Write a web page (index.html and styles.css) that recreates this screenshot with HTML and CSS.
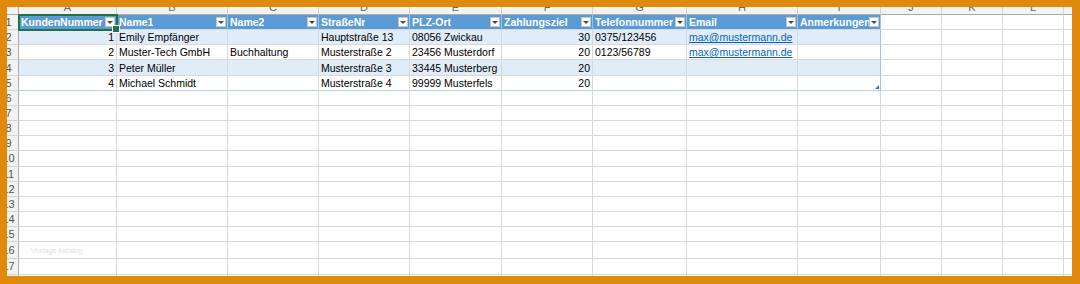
FILE: index.html
```html
<!DOCTYPE html>
<html lang="de">
<head>
  <meta charset="UTF-8">
  <meta name="viewport" content="width=device-width, initial-scale=1.0">
  <title>Kundenliste</title>
  <link rel="stylesheet" href="styles.css">
</head>
<body>
  <div class="sheet-wrap">
    <table class="sheet">
      <colgroup>
        <col class="w-rh">
        <col class="w-a"><col class="w-b"><col class="w-c"><col class="w-d"><col class="w-e">
        <col class="w-f"><col class="w-g"><col class="w-h"><col class="w-i">
        <col class="w-j"><col class="w-k"><col class="w-l"><col class="w-m">
      </colgroup>
      <thead>
        <tr class="letters">
          <th class="corner"></th>
          <th>A</th><th>B</th><th>C</th><th>D</th><th>E</th><th>F</th><th>G</th>
          <th>H</th><th>I</th><th>J</th><th>K</th><th>L</th><th>M</th>
        </tr>
      </thead>
      <tbody id="rows">
        <tr>
          <th class="rh">1</th>
          <td class="th sel"><div class="hd"><span>KundenNummer</span><i class="flt"></i></div></td>
          <td class="th"><div class="hd"><span>Name1</span><i class="flt"></i></div></td>
          <td class="th"><div class="hd"><span>Name2</span><i class="flt"></i></div></td>
          <td class="th"><div class="hd"><span>StraßeNr</span><i class="flt"></i></div></td>
          <td class="th"><div class="hd"><span>PLZ-Ort</span><i class="flt"></i></div></td>
          <td class="th"><div class="hd"><span>Zahlungsziel</span><i class="flt"></i></div></td>
          <td class="th"><div class="hd"><span>Telefonnummer</span><i class="flt"></i></div></td>
          <td class="th"><div class="hd"><span>Email</span><i class="flt"></i></div></td>
          <td class="th last"><div class="hd"><span>Anmerkungen</span><i class="flt"></i></div></td>
          <td></td><td></td><td></td><td></td>
        </tr>
        <tr class="band">
          <th class="rh">2</th>
          <td class="t num">1</td>
          <td class="t">Emily Empfänger</td>
          <td class="t"></td>
          <td class="t">Hauptstraße 13</td>
          <td class="t">08056 Zwickau</td>
          <td class="t num">30</td>
          <td class="t">0375/123456</td>
          <td class="t"><a class="mail" href="#">max@mustermann.de</a></td>
          <td class="t last"></td>
          <td></td><td></td><td></td><td></td>
        </tr>
        <tr>
          <th class="rh">3</th>
          <td class="t num">2</td>
          <td class="t">Muster-Tech GmbH</td>
          <td class="t">Buchhaltung</td>
          <td class="t">Musterstraße 2</td>
          <td class="t">23456 Musterdorf</td>
          <td class="t num">20</td>
          <td class="t">0123/56789</td>
          <td class="t"><a class="mail" href="#">max@mustermann.de</a></td>
          <td class="t last"></td>
          <td></td><td></td><td></td><td></td>
        </tr>
        <tr class="band">
          <th class="rh">4</th>
          <td class="t num">3</td>
          <td class="t">Peter Müller</td>
          <td class="t"></td>
          <td class="t">Musterstraße 3</td>
          <td class="t">33445 Musterberg</td>
          <td class="t num">20</td>
          <td class="t"></td>
          <td class="t"></td>
          <td class="t last"></td>
          <td></td><td></td><td></td><td></td>
        </tr>
        <tr class="end">
          <th class="rh">5</th>
          <td class="t num">4</td>
          <td class="t">Michael Schmidt</td>
          <td class="t"></td>
          <td class="t">Musterstraße 4</td>
          <td class="t">99999 Musterfels</td>
          <td class="t num">20</td>
          <td class="t"></td>
          <td class="t"></td>
          <td class="t last grip"></td>
          <td></td><td></td><td></td><td></td>
        </tr>
      </tbody>
    </table>
  </div>

  <script>
    // empty rows below the table
    const rows = document.getElementById('rows');
    for (let r = 6; r <= 18; r++) {
      const tr = document.createElement('tr');
      let html = '<th class="rh">' + r + '</th>';
      for (let c = 0; c < 13; c++) {
        if (r === 16 && c === 0) {
          html += '<td><span class="wm">Vorlage katalog</span></td>';
        } else {
          html += '<td></td>';
        }
      }
      tr.innerHTML = html;
      rows.appendChild(tr);
    }
  </script>
</body>
</html>
```

FILE: styles.css
```css
* {
  box-sizing: border-box;
}

body {
  margin: 0;
  height: 284px;
  padding: 7px 8px 8px 7px;
  background-color: #e0890b; /* orange frame round the sheet */
  font-family: "Liberation Sans", Arial, sans-serif;
}

.sheet-wrap {
  width: 1065px;
  height: 269px;
  overflow: hidden;
  background-color: #fff;
}

.sheet {
  table-layout: fixed;
  border-collapse: separate;
  border-spacing: 0;
  width: 1095px;
  margin: -8px 0 0 -8px; /* sheet is scrolled a little, headers are cut */
  font-size: 10.5px;
  color: #000;
}

.w-rh { width: 20px; }
.w-a { width: 98px; }
.w-b { width: 111px; }
.w-c { width: 91px; }
.w-d { width: 91px; }
.w-e { width: 92px; }
.w-f { width: 91px; }
.w-g { width: 94px; }
.w-h { width: 111px; }
.w-i { width: 83px; }
.w-j { width: 61px; }
.w-k { width: 61px; }
.w-l { width: 61px; }
.w-m { width: 30px; }

.sheet tr {
  height: 15.16px;
}

/* column letters */
.sheet .letters {
  height: 16px;
}

.letters th {
  height: 16px;
  padding: 1px 0 0;
  background-color: #f3f3f3;
  border-right: 1px solid #d4d4d4;
  border-bottom: 1px solid #ababab;
  color: #666;
  font-size: 11px;
  font-weight: normal;
  line-height: 14px;
  text-align: center;
}

.letters .corner {
  border-right-color: #ababab;
}

/* row numbers */
.rh {
  padding: 0;
  background-color: #f3f3f3;
  border-right: 1px solid #ababab;
  border-bottom: 1px solid #d4d4d4;
  color: #555;
  font-size: 11px;
  font-weight: normal;
  line-height: 14px;
  text-align: center;
  white-space: nowrap;
}

.sheet td {
  padding: 0 2px;
  border-right: 1px solid #d9d9d9;
  border-bottom: 1px solid #d9d9d9;
  line-height: 14px;
  white-space: nowrap;
  overflow: hidden;
}

.sheet td.num {
  text-align: right;
}

/* table header */
.sheet td.th {
  padding: 0 1px 0 2px;
  background-color: #5b9bd5;
  border-right-color: #9cc2e5;
  color: #fff;
  font-weight: bold;
}

.hd {
  display: flex;
  align-items: center;
  justify-content: space-between;
}

.hd span {
  overflow: hidden;
}

.flt {
  flex: none;
  display: flex;
  align-items: center;
  justify-content: center;
  width: 10px;
  height: 10px;
  background-color: #fff;
  border: 1px solid #c6c6c6;
}

.flt::before {
  content: "";
  border-left: 3px solid transparent;
  border-right: 3px solid transparent;
  border-top: 3px solid #4a4a4a;
  margin-top: 1px;
}

.band td.t {
  background-color: #e0edf9;
}

.sheet td.last {
  border-right-color: #9bc2e6;
}

.end td.t {
  border-bottom-color: #b4cfe8;
}

.mail {
  color: #0563c1;
  text-decoration: underline;
}

/* selected cell A1 */
.sheet td.sel {
  position: relative;
  z-index: 2;
  overflow: visible;
  outline: 2px solid #217346;
  outline-offset: -1px;
}

.sheet td.sel::after {
  content: "";
  position: absolute;
  right: -4px;
  bottom: -4px;
  width: 6px;
  height: 6px;
  background-color: #217346;
  border: 1px solid #fff;
}

/* resize handle of the table */
.sheet td.grip {
  position: relative;
}

.sheet td.grip::after {
  content: "";
  position: absolute;
  right: 1px;
  bottom: 1px;
  border-left: 4px solid transparent;
  border-bottom: 4px solid #3f6fa0;
}

.wm {
  display: inline-block;
  padding-left: 10px;
  color: #e2e2e2;
  font-size: 7.5px;
}
```
